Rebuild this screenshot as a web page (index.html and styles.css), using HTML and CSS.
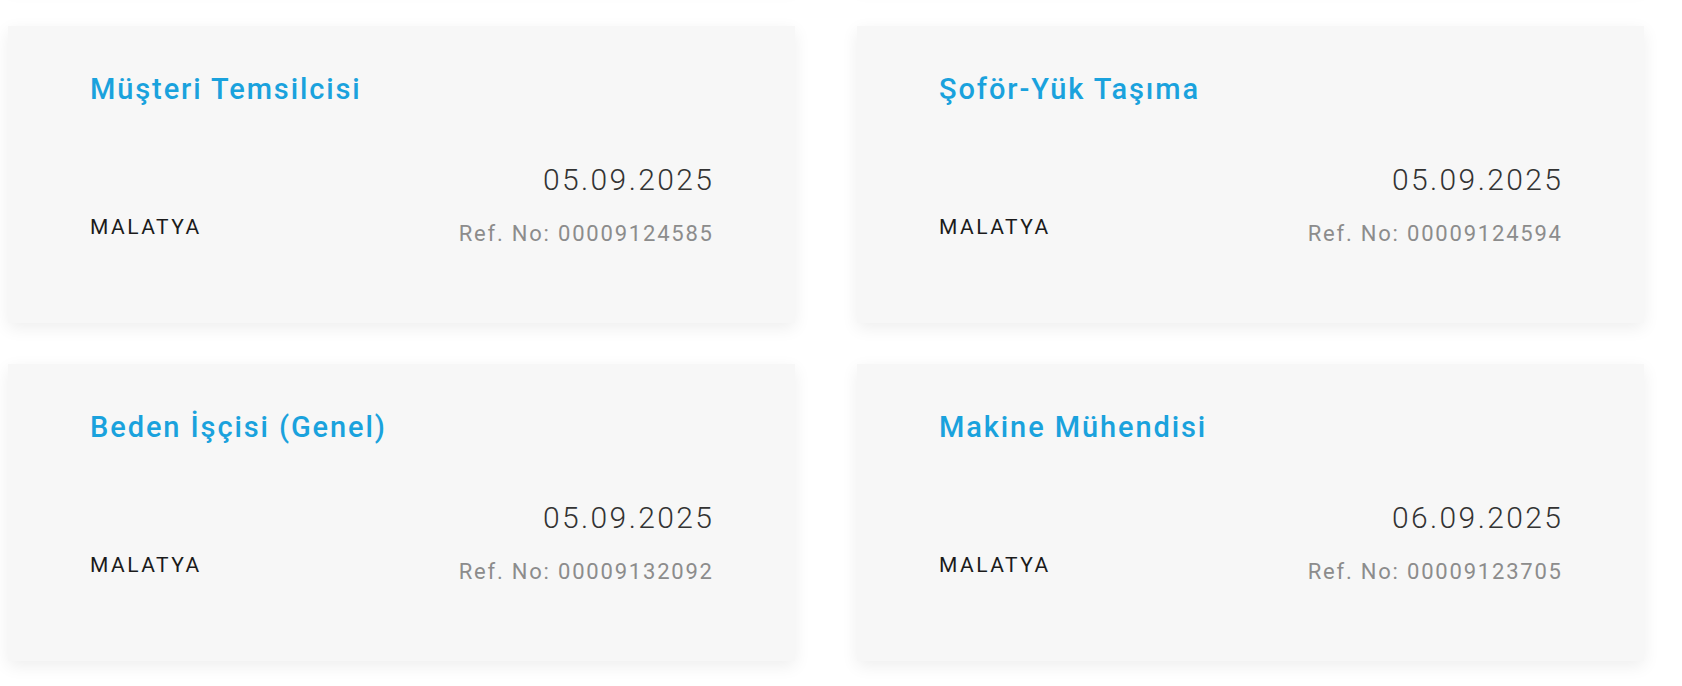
FILE: index.html
```html
<!DOCTYPE html>
<html lang="tr">
<head>
<meta charset="utf-8">
<title>İlanlar</title>
<link rel="stylesheet" href="styles.css">
</head>
<body>
<div class="jobs">
  <div class="job-card job-card--above" aria-hidden="true"></div>
  <div class="job-card job-card--above" aria-hidden="true"></div>
  <a class="job-card" href="#">
    <h3 class="job-title">Müşteri Temsilcisi</h3>
    <div class="job-meta">
      <span class="job-city">MALATYA</span>
      <div class="job-info">
        <span class="job-date">05.09.2025</span>
        <span class="job-ref">Ref. No: 00009124585</span>
      </div>
    </div>
  </a>
  <a class="job-card" href="#">
    <h3 class="job-title">Şoför-Yük Taşıma</h3>
    <div class="job-meta">
      <span class="job-city">MALATYA</span>
      <div class="job-info">
        <span class="job-date">05.09.2025</span>
        <span class="job-ref">Ref. No: 00009124594</span>
      </div>
    </div>
  </a>
  <a class="job-card" href="#">
    <h3 class="job-title">Beden İşçisi (Genel)</h3>
    <div class="job-meta">
      <span class="job-city">MALATYA</span>
      <div class="job-info">
        <span class="job-date">05.09.2025</span>
        <span class="job-ref">Ref. No: 00009132092</span>
      </div>
    </div>
  </a>
  <a class="job-card" href="#">
    <h3 class="job-title">Makine Mühendisi</h3>
    <div class="job-meta">
      <span class="job-city">MALATYA</span>
      <div class="job-info">
        <span class="job-date">06.09.2025</span>
        <span class="job-ref">Ref. No: 00009123705</span>
      </div>
    </div>
  </a>
</div>
</body>
</html>
```
FILE: styles.css
```css
html, body {
  margin: 0;
  padding: 0;
  background: #ffffff;
  overflow: hidden;
}

body {
  font-family: Roboto, "Liberation Sans", sans-serif;
  height: 686px;
}

.jobs {
  display: grid;
  grid-template-columns: 787px 787px;
  column-gap: 62px;
  row-gap: 41px;
  padding-left: 8px;
  margin-top: -312px;
}

.job-card {
  display: flex;
  flex-direction: column;
  height: 297px;
  box-sizing: border-box;
  padding: 46px 83px 0 82px;
  background: #f7f7f7;
  box-shadow: 0 5px 16px rgba(0, 0, 0, 0.07);
  text-decoration: none;
}

.job-title {
  margin: 0;
  font-size: 29px;
  line-height: 34px;
  font-weight: 500;
  color: #1aa2dd;
  letter-spacing: 1.9px;
}

.job-meta {
  display: flex;
  justify-content: space-between;
  align-items: flex-end;
  margin-top: 56px;
}

.job-city {
  font-size: 21px;
  line-height: 24px;
  color: #1b1b1b;
  letter-spacing: 2.5px;
  margin-bottom: 20px;
}

.job-info {
  display: flex;
  flex-direction: column;
  align-items: flex-end;
}

.job-date {
  font-size: 30px;
  font-weight: 300;
  line-height: 36px;
  color: #333333;
  letter-spacing: 2.4px;
  margin-right: -2.4px;
}

.job-ref {
  margin-top: 23px;
  font-size: 22px;
  line-height: 26px;
  color: #8c8c8c;
  letter-spacing: 1.8px;
  margin-right: -1.8px;
  margin-bottom: 12px;
}
```
